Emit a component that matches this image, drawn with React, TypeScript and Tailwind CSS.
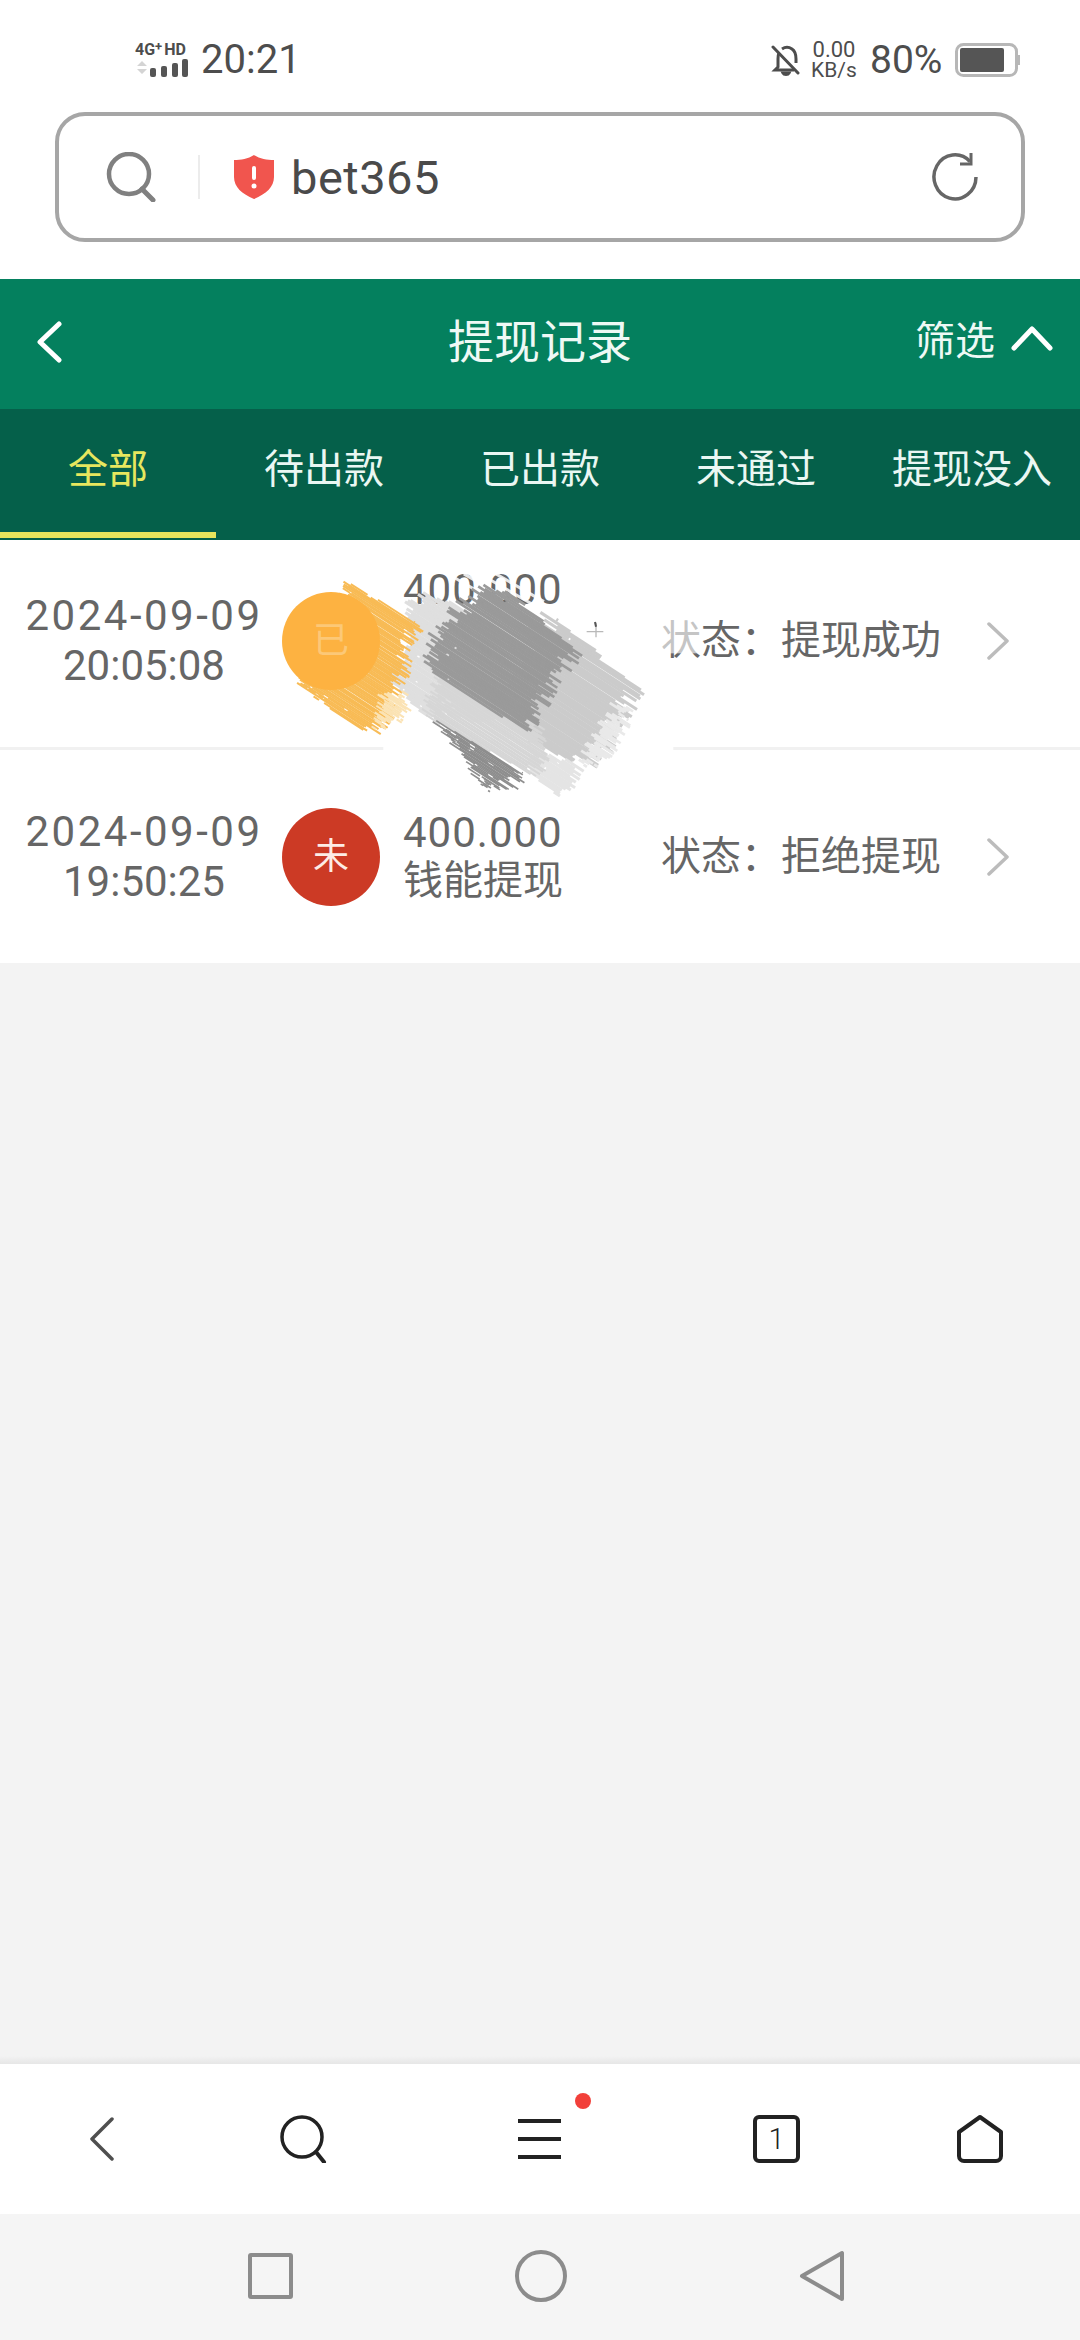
import { useMemo } from "react";

const FONT = "font-['Roboto','Noto_Sans_CJK_SC',sans-serif]";

type Patch = { pts: number[][]; c: string; rough: number; sw: number; jag: number };

// the scribble over the first row: outlines in 3x px, filled with slanted strokes
const patches: Patch[] = [
  { pts: [[420, 140], [470, 100], [560, 130], [700, 250], [720, 480], [470, 470], [355, 360], [410, 270]], c: "#dfdfdf", rough: 0.08, sw: 9, jag: 22 },
  { pts: [[230, 80], [260, 80], [440, 190], [410, 250], [395, 340], [350, 470], [300, 520], [270, 510], [80, 370], [80, 360]], c: "#f8bb55", rough: 0.22, sw: 6, jag: 30 },
  { pts: [[340, 410], [400, 395], [410, 460], [320, 515]], c: "#fbe3b4", rough: 0.5, sw: 6, jag: 20 },
  { pts: [[850, 165], [1090, 380], [1030, 510], [990, 570], [930, 620], [770, 540], [700, 400], [780, 250]], c: "#cbcbcb", rough: 0.1, sw: 9, jag: 40 },
  { pts: [[1040, 440], [1080, 440], [1000, 590], [940, 620]], c: "#e9e9e9", rough: 0.1, sw: 8, jag: 30 },
  { pts: [[770, 560], [930, 620], [900, 690], [860, 710], [790, 640]], c: "#e4e4e4", rough: 0.12, sw: 9, jag: 20 },
  { pts: [[470, 470], [500, 330], [800, 450], [830, 600], [780, 640]], c: "#d6d6d6", rough: 0.2, sw: 6, jag: 26 },
  { pts: [[500, 490], [550, 510], [760, 640], [730, 670], [650, 695], [600, 615], [560, 565]], c: "#8e8e8e", rough: 0.55, sw: 5, jag: 30 },
  { pts: [[620, 85], [700, 85], [920, 270], [860, 340], [800, 440], [760, 510], [480, 330], [490, 250], [550, 175]], c: "#9a9a9a", rough: 0.05, sw: 8, jag: 34 },
];

const ANGLE = 33;

function Scribble() {
  const lines = useMemo(() => {
    let seed = 20240909;
    const rnd = () => (seed = (seed * 16807) % 2147483647) / 2147483647;
    const cos = Math.cos((ANGLE * Math.PI) / 180);
    const sin = Math.sin((ANGLE * Math.PI) / 180);
    return patches.flatMap((p, pi) => {
      const out: { k: string; x1: number; x2: number; y: number; c: string; sw: number }[] = [];
      const uv = p.pts.map(([x, y]) => [x * cos + y * sin, -x * sin + y * cos]);
      const vs = uv.map((q) => q[1]);
      for (let v = Math.min(...vs); v < Math.max(...vs); v += p.sw * 0.75) {
        const hits: number[] = [];
        uv.forEach((a, i) => {
          const b = uv[(i + 1) % uv.length];
          if (a[1] <= v !== b[1] <= v) hits.push(a[0] + ((v - a[1]) / (b[1] - a[1])) * (b[0] - a[0]));
        });
        if (hits.length < 2) continue;
        let u = Math.min(...hits) + (rnd() - 0.5) * p.jag * 2;
        const end = Math.max(...hits) + (rnd() - 0.5) * p.jag * 2;
        let i = 0;
        while (u < end) {
          const len = rnd() < p.rough ? 15 + rnd() * 50 : 1000;
          const x2 = Math.min(end, u + len);
          out.push({ k: `${pi}-${v}-${i}`, x1: u, x2, y: v + (rnd() - 0.5) * 3, c: p.c, sw: p.sw });
          u = x2 + 4 + rnd() * (p.rough > 0.15 ? 18 : 5);
          i++;
        }
      }
      return out;
    });
  }, []);

  return (
    <svg viewBox="0 0 1320 750" className="absolute left-[270px] top-[560px] z-10 h-[250px] w-[440px]">
      {/* white wipe over the row text and its divider */}
      <rect x="340" y="545" width="870" height="40" fill="#ffffff" />
      <g transform="translate(640 20) rotate(30)" stroke="#ffffff" strokeWidth="9" opacity="0.85">
        <line x1="0" y1="0" x2="210" y2="0" />
        <line x1="-20" y1="24" x2="190" y2="24" />
        <line x1="-40" y1="48" x2="170" y2="48" />
        <line x1="-60" y1="72" x2="150" y2="72" />
      </g>
      <rect x="1172" y="150" width="120" height="130" fill="#ffffff" opacity="0.62" />
      <g transform={`rotate(${ANGLE})`}>
        {lines.map((l) => (
          <line key={l.k} x1={l.x1} x2={l.x2} y1={l.y} y2={l.y} stroke={l.c} strokeWidth={l.sw} />
        ))}
      </g>
      <path d="M950 215h50M978 188v44" stroke="#b9b9b9" strokeWidth="4" fill="none" />
      <path d="M975 186l3 14" stroke="#555555" strokeWidth="6" fill="none" />
    </svg>
  );
}

function StatusBar() {
  return (
    <div className="mt-[37px] flex h-[46px] items-center text-[#4d4d4d]">
      <div className="ml-[135px] flex h-[36px] w-[58px] flex-col">
        <div className="flex h-[16px] items-start text-[16px] font-bold leading-[16px]">
          <span>4G</span>
          <span className="-mt-[3px] text-[13px]">+</span>
          <span className="ml-[2px]">HD</span>
        </div>
        <svg width="58" height="20" viewBox="0 0 58 20" fill="none">
          <path d="M2 8l5-5 5 5zM2 11l5 5 5-5z" fill="#d4d4d4" />
          <rect x="15" y="10" width="6" height="9" rx="2" fill="#555555" />
          <rect x="26" y="8" width="6" height="11" rx="2" fill="#555555" />
          <rect x="37" y="5" width="6" height="14" rx="2" fill="#555555" />
          <rect x="47" y="1" width="6" height="18" rx="2" fill="#555555" />
        </svg>
      </div>
      <span className="ml-[8px] w-[100px] text-[40px] leading-none">20:21</span>
      <svg className="ml-[470px]" width="30" height="32" viewBox="0 0 30 32" fill="none" stroke="#4d4d4d" strokeWidth="3">
        <path d="M2 3l25 26" strokeLinecap="round" />
        <path d="M8 9c-1 2-1 4-1 6v8l-3 3h19M11 5c3-2 7-2 10 0 3 2 4 6 4 10v4" />
        <path d="M12 29c1 2 5 2 6 0z" fill="#4d4d4d" />
      </svg>
      <div className="ml-[8px] flex w-[50px] flex-col items-center text-[22px] leading-[21px]">
        <span>0.00</span>
        <span className="text-[21px]">KB/s</span>
      </div>
      <span className="ml-[11px] w-[72px] text-[39px] leading-none">80%</span>
      <svg className="ml-[13px]" width="66" height="34" viewBox="0 0 66 34" fill="none">
        <rect x="1.5" y="1.5" width="60" height="31" rx="7" stroke="#b7b7b7" strokeWidth="3" />
        <rect x="5" y="5" width="44" height="24" rx="2" fill="#555555" />
        <path d="M63 12h2v10h-2z" fill="#b7b7b7" />
      </svg>
    </div>
  );
}

function SearchBox() {
  return (
    <div className="mx-[55px] mt-[29px] flex h-[130px] items-center rounded-[30px] border-[4px] border-[#a6a6a6]">
      <svg className="ml-[46px]" width="52" height="50" viewBox="0 0 52 50" fill="none" stroke="#808080" strokeWidth="4.5">
        <circle cx="24" cy="22" r="20" />
        <path d="M37 37l11 11" strokeLinecap="round" strokeWidth="5" />
      </svg>
      <div className="ml-[41px] h-[44px] w-[2px] bg-[#ececec]" />
      <svg className="ml-[33px]" width="42" height="44" viewBox="0 0 42 44">
        <path d="M21 0c6 4 13 5 20 5v17c0 10-8 17-20 22C9 39 1 32 1 22V5c7 0 14-1 20-5z" fill="#f1554e" />
        <rect x="19" y="11" width="4" height="14" rx="2" fill="#ffffff" />
        <circle cx="21" cy="31" r="2.5" fill="#ffffff" />
      </svg>
      <span className="ml-[16px] text-[47px] leading-none tracking-[0.5px] text-[#4a4a4a]">bet365</span>
      <svg className="ml-auto mr-[41px]" width="50" height="50" viewBox="0 0 50 50" fill="none" stroke="#666666" strokeWidth="3.5">
        <path d="M46 25a21 22 0 1 1-6-15.500" />
        <path d="M41 1v11H30" strokeWidth="3" />
      </svg>
    </div>
  );
}

function Header() {
  return (
    <div className="grid h-[130px] grid-cols-[1fr_auto_1fr] items-center bg-[#04805e] pb-[4px] text-[#eef9f5]">
      <svg className="ml-[35px]" width="28" height="42" viewBox="0 0 28 42" fill="none" stroke="#ffffff" strokeWidth="5" strokeLinecap="round" strokeLinejoin="round">
        <path d="M24 3L5 21l19 18" />
      </svg>
      <span className="text-[46px] leading-none">提现记录</span>
      <div className="flex items-center justify-end pr-[27px]">
        <span className="text-[40px] leading-none">筛选</span>
        <svg className="ml-[16px] mb-[8px]" width="42" height="26" viewBox="0 0 42 26" fill="none" stroke="#ffffff" strokeWidth="5" strokeLinecap="round" strokeLinejoin="round">
          <path d="M3 23L21 4l18 19" />
        </svg>
      </div>
    </div>
  );
}

const tabs = ["全部", "待出款", "已出款", "未通过", "提现没入"];

function Tabs() {
  return (
    <div className="grid h-[131px] grid-cols-5 bg-[#05604a]">
      {tabs.map((t, i) => (
        <div key={t} className={`relative flex items-center justify-center pb-[9px] text-[40px] leading-none ${i === 0 ? "text-[#e7e75e]" : "text-[#eaf7f3]"}`}>
          {t}
          {i === 0 && <div className="absolute bottom-[2px] left-0 h-[6px] w-full bg-[#e8e55c]" />}
        </div>
      ))}
    </div>
  );
}

function Chevron() {
  return (
    <svg className="ml-[1px]" width="24" height="38" viewBox="0 0 24 38" fill="none" stroke="#bcbcbc" strokeWidth="3.500" strokeLinecap="round" strokeLinejoin="round">
      <path d="M3 2l18 17L3 36" />
    </svg>
  );
}

function Row1() {
  return (
    <div className="flex h-[207px] items-center bg-white pb-[5px] text-[#666666]">
      <div className="w-[282px] pl-[6px] text-center text-[42px] leading-[50px]">
        <div className="tracking-[2.5px]">2024-09-09</div>
        <div>20:05:08</div>
      </div>
      <div className="relative z-20 flex h-[98px] w-[98px] items-center justify-center rounded-full bg-[#fdb241] text-[36px] leading-none text-[#fcc877]">已</div>
      <div className="ml-[23px] mb-[102px] w-[258px] text-[42px] leading-[48px] tracking-[1px]">400.000</div>
      <div className="w-[324px] text-[40px] leading-none">状态：提现成功</div>
      <Chevron />
    </div>
  );
}

function Row2() {
  return (
    <div className="flex h-[213px] items-center bg-white text-[#666666]">
      <div className="w-[282px] pl-[6px] text-center text-[42px] leading-[50px]">
        <div className="tracking-[2.5px]">2024-09-09</div>
        <div>19:50:25</div>
      </div>
      <div className="flex h-[98px] w-[98px] items-center justify-center rounded-full bg-[#cc3a25] text-[36px] leading-none text-[#fdece6]">未</div>
      <div className="ml-[23px] w-[258px] text-[40px] leading-[48px]">
        <div className="text-[42px] tracking-[1px]">400.000</div>
        <div>钱能提现</div>
      </div>
      <div className="w-[324px] text-[40px] leading-none">状态：拒绝提现</div>
      <Chevron />
    </div>
  );
}

function BrowserBar() {
  return (
    <div className="flex h-[150px] items-center bg-white">
      <svg className="ml-[90px]" width="24" height="44" viewBox="0 0 24 44" fill="none" stroke="#4f4f4f" strokeWidth="3.500" strokeLinecap="round" strokeLinejoin="round">
        <path d="M22 2L2 22l20 20" />
      </svg>
      <svg className="ml-[166px]" width="48" height="48" viewBox="0 0 48 48" fill="none" stroke="#222222" strokeWidth="3.500">
        <circle cx="22" cy="22" r="20" />
        <path d="M36 37l8 10" strokeWidth="4" strokeLinecap="round" />
      </svg>
      <div className="relative ml-[190px] flex h-[40px] w-[43px] flex-col justify-between">
        <div className="h-[4px] bg-[#222222]" />
        <div className="h-[4px] bg-[#222222]" />
        <div className="h-[4px] bg-[#222222]" />
        <div className="absolute -top-[26px] left-[57px] h-[16px] w-[16px] rounded-full bg-[#f2403a]" />
      </div>
      <div className="ml-[192px] flex h-[48px] w-[47px] items-center justify-center rounded-[6px] border-[4px] border-[#222222] text-[29px] font-light leading-none text-[#222222]">1</div>
      <svg className="ml-[156px]" width="48" height="48" viewBox="0 0 48 48" fill="none" stroke="#222222" strokeWidth="4" strokeLinejoin="round">
        <path d="M24 2L45 17v24a5 5 0 0 1-5 5H8a5 5 0 0 1-5-5V17z" />
      </svg>
    </div>
  );
}

function SystemNav() {
  return (
    <div className="flex h-[126px] items-center bg-[#f5f5f5] pb-[2px]">
      <div className="ml-[248px] h-[46px] w-[45px] rounded-[3px] border-[4px] border-[#8c8c8c]" />
      <div className="ml-[222px] h-[52px] w-[52px] rounded-full border-[4px] border-[#8c8c8c]" />
      <svg className="ml-[232px]" width="46" height="52" viewBox="0 0 46 52" fill="none" stroke="#8c8c8c" strokeWidth="4" strokeLinejoin="round">
        <path d="M43 3v46L3 26z" />
      </svg>
    </div>
  );
}

export default function App() {
  return (
    <div className={`relative flex h-[2340px] w-[1080px] flex-col overflow-hidden bg-[#f3f3f3] ${FONT}`}>
      <div className="flex h-[279px] flex-col bg-white">
        <StatusBar />
        <SearchBox />
      </div>
      <Header />
      <Tabs />
      <Row1 />
      <div className="h-[3px] bg-[#f1f1f1]" />
      <Row2 />
      <div className="flex-1" />
      <div className="h-[8px] bg-gradient-to-b from-[#f3f3f3] to-[#e6e6e6]" />
      <BrowserBar />
      <SystemNav />
      <Scribble />
    </div>
  );
}
